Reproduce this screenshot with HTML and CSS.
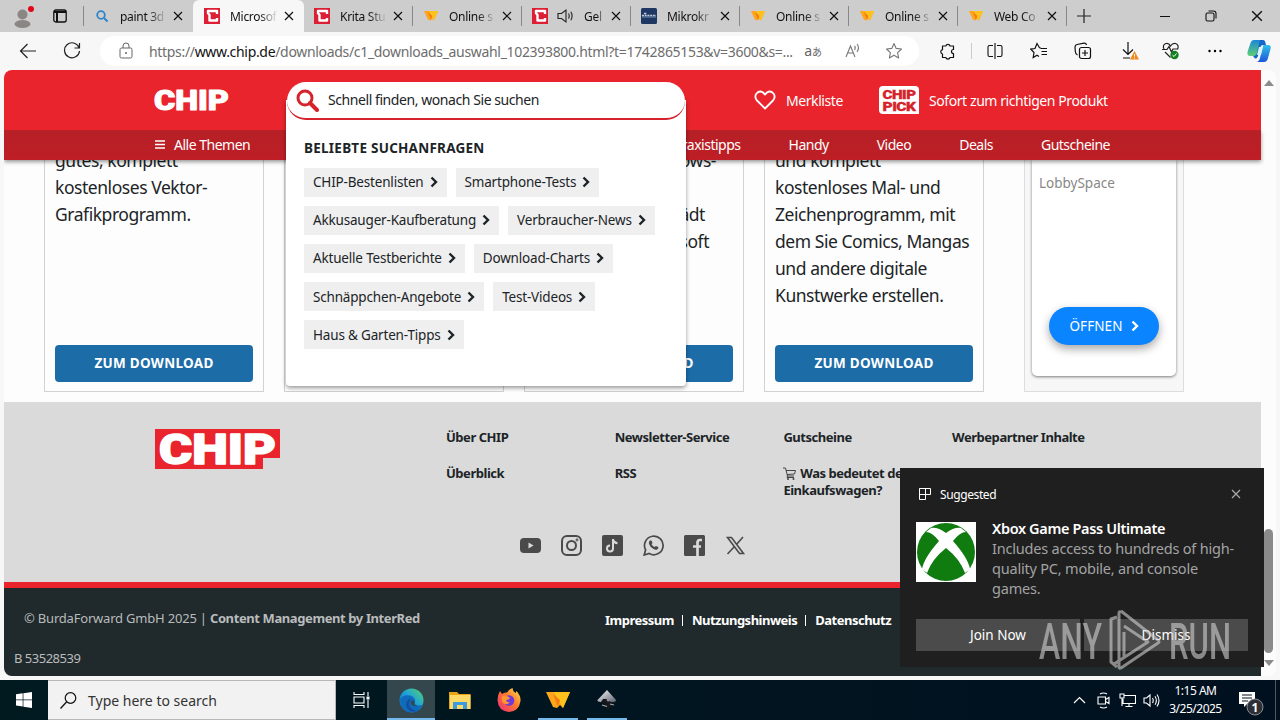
FILE: index.html
```html
<!DOCTYPE html>
<html lang="de">
<head>
<meta charset="UTF-8" />
<meta name="viewport" content="width=device-width, initial-scale=1" />
<title>CHIP Downloads</title>
<link rel="stylesheet" href="styles.css">
</head>
<body>
<svg class="sprite" width="0" height="0">
  <defs>
    <linearGradient id="gEdge" x1="0" y1="1" x2="1" y2="0"><stop offset="0" stop-color="#0c59a4"/><stop offset=".5" stop-color="#1b9de2"/><stop offset="1" stop-color="#56d66a"/></linearGradient>
    <linearGradient id="gFox" x1="1" y1="0" x2="0" y2="1"><stop offset="0" stop-color="#ffe14a"/><stop offset=".45" stop-color="#ff7a2f"/><stop offset="1" stop-color="#f0247a"/></linearGradient>
    <linearGradient id="gCop1" x1="0" y1="0" x2="0" y2="1"><stop offset="0" stop-color="#1a87d8"/><stop offset="1" stop-color="#5fcf72"/></linearGradient>
    <linearGradient id="gCop2" x1="0" y1="0" x2="0" y2="1"><stop offset="0" stop-color="#2fc0ea"/><stop offset="1" stop-color="#1c56d8"/></linearGradient>
    <linearGradient id="gInk" x1="0" y1="0" x2="1" y2="1"><stop offset="0" stop-color="#fff"/><stop offset="1" stop-color="#5a6070"/></linearGradient>
  </defs>
  <symbol id="x" viewBox="0 0 10 10"><path d="M1 1l8 8M9 1l-8 8" fill="none" stroke="currentColor" stroke-width="1.2"/></symbol>
  <symbol id="chev" viewBox="0 0 8 12"><path d="M1.500 1.500L6 6l-4.500 4.500" fill="none" stroke="currentColor" stroke-width="2.400"/></symbol>
  <symbol id="fav-chip" viewBox="0 0 16 16"><rect width="16" height="16" fill="#dd1f35"/><path d="M13 6V3H4v2l1.500 2V12.500H13V10" fill="none" stroke="#fff" stroke-width="2.400" stroke-linejoin="round"/></symbol>
  <symbol id="fav-w" viewBox="0 0 24 17"><path d="M0 0h24l-7 16-3-3-3 3-4-1z" fill="#ffa51c"/><path d="M8 0h16l-7 16z" fill="#ffc21c"/><path d="M7 2l5 13 2-7z" fill="#f47b12"/></symbol>
  <symbol id="star" viewBox="0 0 18 18"><path d="M9 1.500l2.200 4.900 5.300.6-3.900 3.600 1 5.300L9 13.300l-4.600 2.600 1-5.300L1.500 7l5.300-.6z" fill="none" stroke="currentColor" stroke-width="1.100" stroke-linejoin="round"/></symbol>
</svg>

<div class="tabbar">
  <div class="tab-tools">
    <svg class="avatar" width="20" height="24" viewBox="0 0 20 24"><ellipse cx="8.500" cy="20" rx="8" ry="4" fill="#8a8683"/><circle cx="8.500" cy="10.500" r="5" fill="#8a8683"/><circle cx="17" cy="5" r="3" fill="#e3061a"/></svg>
    <svg width="14" height="14" viewBox="0 0 14 14"><rect x=".8" y="1" width="12.400" height="12" rx="2" fill="none" stroke="#111" stroke-width="1.300"/><path d="M1 3h12M4 3v10" stroke="#111" stroke-width="2"/></svg>
  </div>
  <div class="tab"><svg width="16" height="16" viewBox="0 0 16 16"><circle cx="7" cy="7" r="3.800" fill="none" stroke="#2f83c9" stroke-width="1.800"/><path d="M10 10l3.500 3.500" stroke="#2f83c9" stroke-width="2"/></svg><span>paint 3d</span><svg class="close"><use href="#x"/></svg></div>
  <div class="tab active"><svg width="16" height="16"><use href="#fav-chip"/></svg><span>Microsof</span><svg class="close"><use href="#x"/></svg></div>
  <div class="tab line"><svg width="16" height="16"><use href="#fav-chip"/></svg><span>Krita Stu</span><svg class="close"><use href="#x"/></svg></div>
  <div class="tab line"><svg class="w" width="16" height="10"><use href="#fav-w"/></svg><span>Online s</span><svg class="close"><use href="#x"/></svg></div>
  <div class="tab line"><svg width="16" height="16"><use href="#fav-chip"/></svg><svg class="speaker" width="17" height="16" viewBox="0 0 17 16"><path d="M1 5.500h3.500L9 2v12l-4.500-3.500H1zM11.500 5.500q1.500 2.500 0 5M13.800 3.800q2.600 4.200 0 8.400" fill="none" stroke="#222" stroke-width="1.100"/></svg><span>Gel</span><svg class="close"><use href="#x"/></svg></div>
  <div class="tab line"><svg width="16" height="16" viewBox="0 0 16 16"><rect width="16" height="16" rx="1.500" fill="#1e3763"/><path d="M1 9h14" stroke="#6f87ab"/><path d="M1 7.500h14M3 5.500h3" stroke="#c2cddd" stroke-width="1.500" stroke-dasharray="2 .7"/></svg><span>Mikrokr</span><svg class="close"><use href="#x"/></svg></div>
  <div class="tab line"><svg class="w" width="16" height="10"><use href="#fav-w"/></svg><span>Online s</span><svg class="close"><use href="#x"/></svg></div>
  <div class="tab line"><svg class="w" width="16" height="10"><use href="#fav-w"/></svg><span>Online s</span><svg class="close"><use href="#x"/></svg></div>
  <div class="tab line"><svg class="w" width="16" height="10"><use href="#fav-w"/></svg><span>Web Co</span><svg class="close"><use href="#x"/></svg></div>
  <svg class="plus" width="14" height="14" viewBox="0 0 14 14"><path d="M7 0v14M0 7h14" stroke="#222" stroke-width="1.200"/></svg>
  <div class="win-buttons">
    <svg width="12" height="12" viewBox="0 0 12 12"><path d="M1 6.500h10" stroke="#111"/></svg>
    <svg width="12" height="12" viewBox="0 0 12 12"><rect x="1" y="3" width="8" height="8" rx="1.500" fill="none" stroke="#111" stroke-width="1.100"/><path d="M3.500 1h5q2.500 0 2.500 2.500V8.500" fill="none" stroke="#111" stroke-width="1.100"/></svg>
    <svg width="12" height="12"><use href="#x"/></svg>
  </div>
</div>

<div class="toolbar">
  <div class="nav-icons">
    <svg width="18" height="16" viewBox="0 0 18 16"><path d="M17 8H2M8.500 1L1.500 8l7 7" fill="none" stroke="#222" stroke-width="1.200"/></svg>
    <svg width="18" height="18" viewBox="0 0 18 18"><path d="M16 5.500A7.500 7.500 0 1 0 16.500 9M16.500 1v5h-5" fill="none" stroke="#222" stroke-width="1.200"/></svg>
  </div>
  <div class="address">
    <svg width="14" height="18" viewBox="0 0 14 18"><rect x="1" y="6" width="12" height="10" rx="1.500" fill="none" stroke="#666"/><path d="M4 6V4a3 3 0 0 1 6 0v2" fill="none" stroke="#666"/><circle cx="7" cy="11" r="1" fill="#666"/></svg>
    <span class="url">https://<b>www.chip.de</b>/downloads/c1_downloads_auswahl_102393800.html?t=1742865153&amp;v=3600&amp;s=...</span>
    <span class="translate">a<small>あ</small></span>
    <svg class="read" width="16" height="16" viewBox="0 0 16 16"><path d="M1 14L5.500 3 10 14M2.600 10h5.800M9.500 3q1.500 1.500 0 4M12 1q3 3.500 0 8" fill="none" stroke="#777" stroke-width="1.100"/></svg>
    <svg class="grey" width="18" height="18"><use href="#star"/></svg>
  </div>
  <div class="tool-icons">
    <i class="ext"><svg width="18" height="18" viewBox="0 0 18 18"><path d="M3.500 4h3.300a2.200 2.200 0 0 1 4.200 0h3.500v3.500a1 1 0 0 0 0 4V15.500H11a2.200 2.200 0 0 1-4.200 0H3.500V12A2.200 2.200 0 0 1 3.500 7.700z" fill="none" stroke="#111" stroke-width="1.200" stroke-linejoin="round"/></svg></i>
    <i><svg width="16" height="16" viewBox="0 0 16 16"><path d="M6 2.500H2.500q-1.500 0-1.500 1.500v8q0 1.500 1.500 1.500H6M10 2.500h3.500q1.500 0 1.500 1.500v8q0 1.500-1.500 1.500H10M8 0v16" fill="none" stroke="#111" stroke-width="1.100"/></svg></i>
    <i><svg width="18" height="18" viewBox="0 0 18 18"><path d="M11 6L9.500 5.800 7 1.500 5 6.500l-4.200.6L4 10.500 3.200 15.500 7 13.200l2 1.200M10.500 6.500H17M11.500 9.500H17M11.500 12.500H17" fill="none" stroke="#111" stroke-width="1.200"/></svg></i>
    <i><svg width="18" height="18" viewBox="0 0 18 18"><rect x="5.500" y="5.500" width="11" height="11" rx="2" fill="none" stroke="#111" stroke-width="1.200"/><path d="M11 8v6M8 11h6M3.500 13Q1.500 12 1.300 9.500L1 5Q1 3 3 2.500L10 1.200Q12 1 12.500 3" fill="none" stroke="#111" stroke-width="1.200"/></svg></i>
    <i><svg class="dl" width="20" height="20" viewBox="0 0 20 20"><path d="M8 1v12M3 8.500L8 13.500l5-5M3 17h7" fill="none" stroke="#111" stroke-width="1.200"/><path d="M14.500 10l4.500 8.500h-9z" fill="#f08a1d"/><path d="M14.500 13v2.500M14.500 16.500v1" stroke="#fff"/></svg></i>
    <i><svg width="18" height="18" viewBox="0 0 18 18"><path d="M2 7Q0 3 4 1.500 7 1 8.500 4 10.500 1 13.500 1.500 17.500 3 15.500 7.500M0 7.500h5L7 4.500 9.500 10l1.500-3h4.500M3 10l5.500 5.500" fill="none" stroke="#222" stroke-width="1.200"/><circle cx="12.500" cy="13" r="4.200" fill="#12801f"/><path d="M10.500 13.200l1.500 1.300 2.500-3" fill="none" stroke="#fff"/></svg></i>
    <i><svg width="14" height="4" viewBox="0 0 14 4"><circle cx="1.500" cy="2" r="1.200"/><circle cx="7" cy="2" r="1.200"/><circle cx="12.500" cy="2" r="1.200"/></svg></i>
    <i><svg width="24" height="24" viewBox="0 0 24 24"><path d="M7 1h8l-4 12q-1 4-4 4H3Q-.5 17 .8 12L3.500 4Q4.500 1 7 1z" fill="url(#gCop1)"/><path d="M16.500 6H21q3.500 0 2.500 4l-2.500 9q-1 4-4 4H9q3 0 4-4l2-9z" fill="url(#gCop2)"/><path d="M13 1h3q2 0 2.500 3l.5 2h-3q-2 0-2.500 2L11 17q-1 3-3 2.500L6 17q3 0 4-3z" fill="#1565c8"/><path d="M12 8h4l-2 8H10z" fill="#d9f2fb"/></svg></i>
  </div>
</div>

<div class="window">
  <div class="page">
    <header class="site-header">
      <svg class="logo" width="76" height="22" viewBox="0 0 76 22"><text x="0" y="20.500" textLength="75" lengthAdjust="spacingAndGlyphs">CHIP</text></svg>
      <div class="search">
        <div class="suggest">
          <h2>BELIEBTE SUCHANFRAGEN</h2>
          <div class="terms">
            <a>CHIP-Bestenlisten<svg><use href="#chev"/></svg></a>
            <a>Smartphone-Tests<svg><use href="#chev"/></svg></a>
            <a>Akkusauger-Kaufberatung<svg><use href="#chev"/></svg></a>
            <a>Verbraucher-News<svg><use href="#chev"/></svg></a>
            <a>Aktuelle Testberichte<svg><use href="#chev"/></svg></a>
            <a>Download-Charts<svg><use href="#chev"/></svg></a>
            <a>Schnäppchen-Angebote<svg><use href="#chev"/></svg></a>
            <a>Test-Videos<svg><use href="#chev"/></svg></a>
            <a>Haus &amp; Garten-Tipps<svg><use href="#chev"/></svg></a>
          </div>
        </div>
        <div class="search-field">
          <svg width="23" height="23" viewBox="0 0 23 23"><circle cx="9" cy="9" r="7" fill="none" stroke="#d5222b" stroke-width="3"/><path d="M14 14l7 7" stroke="#d5222b" stroke-width="4" stroke-linecap="round"/></svg>
          <span>Schnell finden, wonach Sie suchen</span>
        </div>
      </div>
      <div class="header-link merk">
        <svg width="22" height="20" viewBox="0 0 22 20"><path d="M11 18.500L3 10.500Q0 7 2.500 3.500 5.500 0 9 2.500L11 4.500l2-2Q16.500 0 19.500 3.500 22 7 19 10.500z" fill="none" stroke="#fff" stroke-width="1.800" stroke-linejoin="round"/></svg>
        <span>Merkliste</span>
      </div>
      <div class="header-link">
        <svg class="pick" width="40" height="28" viewBox="0 0 40 28"><path d="M4 0h32q4 0 4 4v24H4q-4 0-4-4V4q0-4 4-4z" fill="#fff"/><text x="3.500" y="12.500" textLength="33" lengthAdjust="spacingAndGlyphs">CHIP</text><text x="3.500" y="24.500" textLength="33" lengthAdjust="spacingAndGlyphs">PICK</text></svg>
        <span>Sofort zum richtigen Produkt</span>
      </div>
    </header>
    <nav class="site-nav">
      <a class="all"><svg width="10" height="9" viewBox="0 0 10 9"><path d="M0 1h10M0 4.500h10M0 8h10" stroke="#fff" stroke-width="1.400"/></svg>Alle Themen</a>
      <div class="nav-right"><a>Praxistipps</a><a>Handy</a><a>Video</a><a>Deals</a><a>Gutscheine</a></div>
    </nav>

    <main>
      <article class="card"><p>gutes, komplett<br>kostenloses Vektor-<br>Grafikprogramm.</p><a class="btn">ZUM DOWNLOAD</a></article>
      <article class="card"><p></p><a class="btn">ZUM DOWNLOAD</a></article>
      <article class="card"><p class="short"><span class="l1">Windows-</span><br><br><span class="l2">lädt</span><br><span class="l3">Microsoft</span></p><a class="btn">ZUM DOWNLOAD</a></article>
      <article class="card"><p>und komplett<br>kostenloses Mal- und<br>Zeichenprogramm, mit<br>dem Sie Comics, Mangas<br>und andere digitale<br>Kunstwerke erstellen.</p><a class="btn">ZUM DOWNLOAD</a></article>
      <aside class="ad"><div><span>LobbySpace</span><a>ÖFFNEN<svg><use href="#chev"/></svg></a></div></aside>
    </main>

    <footer>
      <div class="foot-top">
        <svg class="foot-logo" width="125" height="40" viewBox="0 0 125 40"><path d="M0 0h125v29h-17v11H0z" fill="#e9242c"/><text x="4" y="34.500" textLength="117" lengthAdjust="spacingAndGlyphs">CHIP</text></svg>
        <div class="foot-links">
          <a>Über CHIP</a><a>Newsletter-Service</a><a>Gutscheine</a><a>Werbepartner Inhalte</a>
          <a>Überblick</a><a>RSS</a><a><svg width="13" height="13" viewBox="0 0 13 13"><path d="M0 1h2.500L4.500 9H11M3 3.500h9.500L11.500 7 4 7.500M4.500 9l-.5 1.500h7" fill="none" stroke="#444"/><circle cx="5" cy="12" r="1" fill="#444"/><circle cx="10.500" cy="12" r="1" fill="#444"/></svg> Was bedeutet der<br>Einkaufswagen?</a>
        </div>
        <div class="social">
          <svg viewBox="0 0 21 21"><rect y="3" width="21" height="15" rx="4" fill="#4a4a4a"/><path d="M8.500 7.500v6l5-3z" fill="#dadada"/></svg>
          <svg viewBox="0 0 21 21" fill="none" stroke="#4a4a4a" stroke-width="2"><rect x="1" y="1" width="19" height="19" rx="5"/><circle cx="10.500" cy="10.500" r="4.500"/><circle cx="16" cy="5" r=".4"/></svg>
          <svg viewBox="0 0 21 21"><rect width="21" height="21" rx="2" fill="#4a4a4a"/><path d="M11 4v9.500a3 3 0 1 1-3-3M11 4.500q.8 3.500 4.500 3.800" fill="none" stroke="#dadada" stroke-width="2"/></svg>
          <svg viewBox="0 0 21 21"><path d="M1.200 20l1.400-5.200a9.300 9.300 0 1 1 3.600 3.700z" fill="none" stroke="#4a4a4a" stroke-width="1.700"/><path d="M6.500 6Q8 4.500 8.700 6l.8 2-.9 1.300q1 2 3 2.800l1.300-1.200 2.300 1.100q.8.700-.7 2.200-1.500 1.200-4-.1Q7 12 6 9 5.500 7 6.500 6z" fill="#4a4a4a"/></svg>
          <svg viewBox="0 0 21 21"><rect width="21" height="21" rx="1.500" fill="#4a4a4a"/><path d="M18 5h-2q-2.500 0-2.500 2.500V21M9 11.500h8" fill="none" stroke="#dadada" stroke-width="2.700"/></svg>
          <svg viewBox="0 0 21 21"><path d="M2.500 2.500h4L18.500 18.500h-4zM18 2L11.500 9.500M9 12L2.500 19" fill="none" stroke="#4a4a4a" stroke-width="1.600"/></svg>
        </div>
      </div>
      <div class="foot-bottom">
        <div class="copy">© BurdaForward GmbH 2025 | <b>Content Management by InterRed</b></div>
        <div class="legal"><a>Impressum</a><i></i><a>Nutzungshinweis</a><i></i><a>Datenschutz</a></div>
        <div class="ref">B 53528539</div>
      </div>
    </footer>
  </div>
  <div class="scrollbar">
    <svg width="10" height="6" viewBox="0 0 10 6"><path d="M0 6L5 0l5 6z" fill="#8b8b8b"/></svg>
    <div class="thumb"></div>
    <svg width="10" height="6" viewBox="0 0 10 6"><path d="M0 0h10L5 6z" fill="#8b8b8b"/></svg>
  </div>
</div>

<div class="toast">
  <div class="toast-head">
    <svg width="12" height="12" viewBox="0 0 12 12"><path d="M.5.500h11v6H.500zM.5.500v11h6V.500M.500 6.500h6" fill="none" stroke="#fff"/></svg>
    <span>Suggested</span>
    <svg class="close"><use href="#x"/></svg>
  </div>
  <div class="toast-body">
    <svg width="60" height="60" viewBox="0 0 60 60"><rect width="60" height="60" fill="#fff"/><circle cx="30" cy="30" r="29" fill="#107c10"/><path d="M15 6Q22 5 30 11 38 5 45 6L50 10Q44 10 37 19 52 36 54 47L49 51Q44 37 30 26 16 37 11 51L6 47Q8 36 23 19 16 10 10 10z" fill="#fff"/></svg>
    <div class="toast-text"><h3>Xbox Game Pass Ultimate</h3><p>Includes access to hundreds of high-<br>quality PC, mobile, and console<br>games.</p></div>
  </div>
  <div class="toast-actions"><button>Join Now</button><button>Dismiss</button></div>
</div>

<svg class="watermark" width="196" height="64" viewBox="0 0 196 64">
  <text x="1" y="51" textLength="63" lengthAdjust="spacingAndGlyphs">ANY</text>
  <text x="131" y="51" textLength="62" lengthAdjust="spacingAndGlyphs">RUN</text>
  <path d="M83 3L120 32q2 2 0 3L83 60q-2 1-2-1V5q0-2 2-1M79 9l-6 2v43l6 5M86 18l24 16-34 22M86 24v26" fill="none" stroke="#d0d0d0" stroke-width="3" stroke-linejoin="round"/>
</svg>

<div class="taskbar">
  <div class="start"><svg width="16" height="16" viewBox="0 0 16 16" fill="#fff"><path d="M0 2.200L6.700 1.300v6.200H0zM7.400 1.200L16 0v7.500H7.400zM0 8.300h6.700v6.200L0 13.600zM7.400 8.300H16V16l-8.600-1.300z"/></svg></div>
  <div class="task-search"><svg width="17" height="17" viewBox="0 0 17 17"><circle cx="10.500" cy="6" r="5.300" fill="none" stroke="#111" stroke-width="1.200"/><path d="M6.500 10L.5 16.500" stroke="#111" stroke-width="1.300"/></svg><span>Type here to search</span></div>
  <div class="task-view"><svg width="17" height="16" viewBox="0 0 17 16"><path d="M1 0v2.500h10V0M1 16v-2.500h10V16M1 5h10v6H1zM15 0v4M15 8v8" fill="none" stroke="#fff" stroke-width="1.100"/><path d="M13.500 4.500h3v3h-3z" fill="#fff"/></svg></div>
  <div class="apps">
    <div class="app current open"><svg width="25" height="25" viewBox="0 0 25 25"><circle cx="12.500" cy="12.500" r="12" fill="url(#gEdge)"/><path d="M1 11Q5 6 11 7.500q6 1.500 5 7-1 1 0 2 4 2 8 0-4 8-12 8Q2 23 1 11z" fill="#0f6cbd"/><path d="M12 11q-4 5 0 9 4 4 9 2-5 3-10 1Q5 19 8 13q2-3 4-2z" fill="#1450a0"/><path d="M12.500 12.500q3-1 3 2 0 3 3 3.500-5 1-6.500-2-1-2 .5-3.500z" fill="#2e4c55"/></svg></div>
    <div class="app"><svg width="22" height="19" viewBox="0 0 22 19"><path d="M0 1h8l2 2h11.500v15H0z" fill="#e8a317"/><path d="M1 4h20.500v14H1z" fill="#ffd966"/><path d="M4 18v-7h14v7h-4v-4H8v4z" fill="#3c9bdc"/></svg></div>
    <div class="app"><svg width="24" height="24" viewBox="0 0 24 24"><path d="M3 3l2 3Q7 4 10 4.500 12 1 15.500 0q0 3 3 5l1-2Q24 8 23.500 13 22 23.500 12 24 1 23 .5 12 .5 7 3 3z" fill="url(#gFox)"/><circle cx="12" cy="12.500" r="5.300" fill="#7139d8"/><path d="M5 8q5-1 8 2-1 2-4 2 1 3 4 2-3 4-7 1-2-3-1-7z" fill="#ff9632"/></svg></div>
    <div class="app open"><svg width="24" height="17"><use href="#fav-w"/></svg></div>
    <div class="app open"><svg width="20" height="21" viewBox="0 0 20 21"><path d="M10 0l9.500 10q1 2-2 2.500l-4 1.500 2 2-3 1-1.500 3.500-2-3-3-1.500 3-2-7-2Q-.5 11 1 9.500z" fill="#16181c"/><path d="M10 0l9 10q0 2-4 2-2-1-4-.5-2-.5-1-2.500H6L4 12Q-1 11.500 1 9.500z" fill="url(#gInk)"/><path d="M5 15l5 1.500M13 14l4 1" stroke="#aaa" stroke-width="1.200"/></svg></div>
  </div>
  <div class="tray">
    <i><svg width="13" height="8" viewBox="0 0 13 8"><path d="M1 7l5.500-5.500L12 7" fill="none" stroke="#fff" stroke-width="1.200"/></svg></i>
    <i><svg width="13" height="17" viewBox="0 0 13 17"><path d="M3 2q3.500-2 7 0M3 15q3.500 2 7 0M1 5h7.500v7H1zM8.500 7.500L12 5.500v6L8.500 9.500" fill="none" stroke="#fff" stroke-width="1.100"/></svg></i>
    <i><svg width="17" height="15" viewBox="0 0 17 15"><path d="M5 2.500h11.500v8H4V6M10 10.500v3M6.500 13.500h7M1 1h4v4H1zM3 5v8" fill="none" stroke="#fff" stroke-width="1.100"/></svg></i>
    <i><svg width="17" height="15" viewBox="0 0 17 15"><path d="M1 5h2.500L7 2v11L3.500 10H1zM9.500 5q1.500 2.500 0 5M12 3.200q2.700 4.300 0 8.600M14 1.500q4 6 0 12" fill="none" stroke="#fff" stroke-width="1.100"/></svg></i>
  </div>
  <div class="clock">1:15 AM<br>3/25/2025</div>
  <div class="notif"><svg width="25" height="25" viewBox="0 0 25 25"><path d="M0 1h16v12H8l-3 3v-3H0z" fill="#fff"/><path d="M3 4h10M3 7h10M3 10h6" stroke="#07101c"/><circle cx="16" cy="16" r="8" fill="#2c3036" stroke="#8a8d92"/><text x="16" y="20.500">1</text></svg></div>
</div>
</body>
</html>
```
FILE: styles.css
```css
* {
  box-sizing: border-box;
}
body {
  margin: 0;
  width: 1280px;
  height: 720px;
  overflow: hidden;
  position: relative;
  background: #f7f7f7;
  font-family: "Noto Sans", sans-serif;
  color: #1c2427;
}
svg {
  flex: none;
}
.sprite {
  position: absolute;
}

/* browser tabs */
.tabbar {
  display: flex;
  align-items: center;
  height: 32px;
  background: #cdcdcd;
  font-size: 12px;
  letter-spacing: -0.3px;
  color: #111;
}
.tab-tools {
  width: 84px;
  height: 20px;
  padding-left: 14px;
  display: flex;
  align-items: center;
  gap: 19px;
  border-right: 1px solid #888;
}
.tab {
  width: 109px;
  height: 32px;
  padding: 0 10px;
  display: flex;
  align-items: center;
  position: relative;
}
.tab span {
  flex: 1;
  margin-left: 10px;
  margin-right: 6px;
  overflow: hidden;
  white-space: nowrap;
  -webkit-mask-image: linear-gradient(to right, #000 60%, transparent);
  mask-image: linear-gradient(to right, #000 60%, transparent);
}
.tab.active {
  width: 111px;
  padding-left: 11px;
  background: #f7f7f7;
  border-radius: 6px 6px 0 0;
}
.tab.line::after {
  content: "";
  position: absolute;
  right: 0;
  top: 6px;
  width: 1px;
  height: 20px;
  background: #888;
}
.tab .speaker {
  margin-left: 9px;
}
.close {
  width: 10px;
  height: 10px;
}
.plus {
  margin-left: 10px;
}
.win-buttons {
  margin-left: auto;
  padding-right: 17px;
  display: flex;
  gap: 34px;
}

/* toolbar */
.toolbar {
  height: 38px;
  display: flex;
  align-items: center;
}
.nav-icons {
  flex: none;
  width: 100px;
  padding-left: 19px;
  display: flex;
  align-items: center;
  gap: 26px;
}
.address {
  flex: none;
  width: 819px;
  height: 30px;
  padding: 0 16px 0 19px;
  border-radius: 15px;
  background: #fff;
  display: flex;
  align-items: center;
}
.url {
  width: 657px;
  margin-left: 16px;
  font-size: 14px;
  letter-spacing: -0.32px;
  color: #6d6d6d;
  white-space: nowrap;
}
.url b {
  font-weight: normal;
  color: #111;
}
.translate {
  font-size: 14px;
  line-height: 18px;
  color: #666;
  width: 41px;
  white-space: nowrap;
}
.translate small {
  font: 10px "Noto Sans CJK JP", sans-serif;
  line-height: 10px;
}
.read {
  margin-right: 24px;
}
.grey {
  color: #777;
}
.tool-icons {
  flex: none;
  display: flex;
  margin-left: 6px;
}
.tool-icons i {
  width: 44px;
  height: 24px;
  display: flex;
  align-items: center;
  justify-content: center;
}
.tool-icons .ext {
  width: 48px;
  padding-right: 3px;
  background: linear-gradient(#ccc, #ccc) 46px 4px / 1px 16px no-repeat;
}
.tool-icons .dl {
  margin-left: 5px;
}

/* web page */
.window {
  margin: 0 4px;
  height: 606px;
  display: flex;
  border-radius: 8px;
  overflow: hidden;
  background: #fcfcfc;
}
.page {
  width: 1257px;
  background: #fdfdfd;
}
.site-header {
  position: relative;
  z-index: 3;
  height: 60px;
  background: #e9242c;
  color: #fff;
  display: flex;
  align-items: center;
  padding-left: 150px;
  font-size: 14px;
}
.logo text,
.foot-logo text {
  font: 900 27px Roboto, sans-serif;
  fill: #fff;
  stroke: #fff;
  stroke-width: 1px;
  stroke-linejoin: round;
}
.foot-logo text {
  font-size: 42px;
  stroke-width: 1.5px;
}
.search {
  position: relative;
  z-index: 5;
  width: 400px;
  margin-top: 2px;
  margin-left: 56px;
  color: #1c2427;
}
.search-field {
  position: relative;
  height: 38px;
  margin: 0 1px;
  padding-left: 9px;
  border-radius: 19px;
  border-bottom: 2px solid #d5222b;
  background: #fff;
  display: flex;
  align-items: center;
  gap: 9px;
  letter-spacing: -0.43px;
}
.search-field span {
  padding-bottom: 1px;
}
.suggest {
  position: absolute;
  top: 18px;
  left: 0;
  width: 400px;
  height: 286px;
  padding: 36px 18px 0;
  background: #fff;
  border-radius: 0 0 4px 4px;
  box-shadow: 0 2px 4px rgba(0,0,0,0.4);
}
.suggest h2 {
  margin: 0 0 7.5px;
  font-size: 13.5px;
  line-height: 24px;
  letter-spacing: 0.25px;
}
.terms {
  display: flex;
  flex-wrap: wrap;
  gap: 9.2px 9px;
}
.terms a {
  height: 29px;
  padding: 0 9px;
  background: #efefef;
  display: flex;
  align-items: center;
  gap: 6px;
  font-size: 13.5px;
  letter-spacing: -0.18px;
}
.terms svg,
.ad svg {
  width: 8px;
  height: 12px;
}
.header-link {
  display: flex;
  align-items: center;
  gap: 10px;
  letter-spacing: -0.42px;
}
.header-link span {
  white-space: nowrap;
}
.merk {
  width: 125px;
  margin-left: 68px;
}
.pick text {
  font: 900 12px Roboto, sans-serif;
  fill: #d5222b;
  stroke: #d5222b;
  stroke-width: 0.3px;
}
.site-nav {
  position: relative;
  z-index: 2;
  height: 30px;
  background: linear-gradient(#b62026, #bf1e26);
  box-shadow: 0 2px 4px rgba(0,0,0,0.4);
  color: #fff;
  display: flex;
  align-items: center;
  justify-content: space-between;
  padding: 0 151px 1px;
  font-size: 14px;
  letter-spacing: -0.5px;
}
.all {
  display: flex;
  align-items: center;
  gap: 9px;
}
.nav-right {
  display: flex;
  gap: 48px;
}
main {
  height: 242px;
  padding: 0 77px 10px 40px;
  display: flex;
  gap: 20px;
  overflow: hidden;
}
.card {
  width: 220px;
  height: 232px;
  padding: 0 10px 9px;
  border: 1px solid #d2d2d2;
  border-top: 0;
  display: flex;
  flex-direction: column;
  justify-content: space-between;
}
.card p {
  margin: -13px 0 0;
  font-size: 17.5px;
  line-height: 27px;
  letter-spacing: -0.45px;
  white-space: nowrap;
}
.card .short {
  text-align: right;
}
.l1 {
  padding-right: 17px;
}
.l2 {
  padding-right: 28px;
}
.l3 {
  padding-right: 24px;
}
.btn {
  height: 37px;
  background: #1c6ca7;
  border-radius: 4px;
  color: #fff;
  font-size: 13.5px;
  font-weight: bold;
  line-height: 36px;
  text-align: center;
  letter-spacing: 0.3px;
}
.ad {
  width: 160px;
  height: 232px;
  margin-left: 20px;
  padding: 0 7px 15px;
  background: #f7f7f7;
  border: 1px solid #ddd;
  border-top: 0;
}
.ad div {
  height: 216px;
  padding: 14px 17px 31px 7px;
  background: #fff;
  border-radius: 0 0 5px 5px;
  box-shadow: 0 1px 3px rgba(0,0,0,0.5);
  display: flex;
  flex-direction: column;
  justify-content: space-between;
  font-size: 13.5px;
  letter-spacing: 0;
  color: #888;
}
.ad a {
  width: 110px;
  height: 38px;
  margin-left: 10px;
  padding-bottom: 1px;
  border-radius: 19px;
  background: #0a84ff;
  color: #fff;
  display: flex;
  align-items: center;
  justify-content: center;
  gap: 8px;
  letter-spacing: 0.1px;
  box-shadow: 0 4px 10px rgba(0,0,0,0.35);
}

/* footer */
.foot-top {
  height: 186px;
  padding: 27px 0 0 151px;
  background: #dadada;
  border-bottom: 6px solid #e9242c;
  display: grid;
  grid-template-columns: 291px 1fr;
  grid-template-rows: 106px 21px;
}
.foot-links {
  display: grid;
  grid-template-columns: repeat(4, 168.7px);
  grid-template-rows: 36px 36px;
  font-size: 13px;
  font-weight: bold;
  line-height: 17px;
  letter-spacing: -0.46px;
}
.foot-links svg {
  vertical-align: -2px;
  margin-right: 1px;
}
.foot-links a {
  white-space: nowrap;
}
.social {
  grid-column: 1 / 3;
  display: flex;
  gap: 20px;
  margin-left: 365px;
}
.social svg {
  width: 21px;
  height: 21px;
}
.foot-bottom {
  height: 88px;
  padding: 20px 10px 0;
  background: #20292b;
  color: #b9bcbd;
  font-size: 13px;
  line-height: 20px;
  letter-spacing: -0.2px;
  display: grid;
  grid-template-columns: 591px 1fr;
  grid-template-rows: 40px 20px;
}
.copy {
  padding-left: 10px;
}
.copy b {
  letter-spacing: -0.4px;
}
.ref {
  letter-spacing: -0.5px;
}
.legal {
  padding-top: 2px;
  display: flex;
  align-items: center;
  height: 22px;
  color: #fff;
  font-weight: bold;
  letter-spacing: -0.5px;
}
.legal i {
  width: 1px;
  height: 11px;
  margin: 0 9px 0 8px;
  background: #fff;
}
.scrollbar {
  width: 15px;
  padding: 10px 0;
  display: flex;
  flex-direction: column;
  align-items: center;
}
.thumb {
  width: 9px;
  height: 124px;
  margin-top: auto;
  margin-bottom: 7px;
  border-radius: 5px;
  background: #8b8b8b;
}

/* notification toast */
.toast {
  position: absolute;
  left: 900px;
  top: 468px;
  z-index: 10;
  width: 364px;
  height: 199px;
  padding: 16px;
  background: #1f1f1f;
  color: #fff;
  display: flex;
  flex-direction: column;
}
.toast-head {
  display: flex;
  align-items: center;
  height: 20px;
  padding: 0 7px 0 3px;
  font-size: 12px;
  gap: 9px;
  letter-spacing: -0.4px;
}
.toast-head .close {
  margin-left: auto;
  color: #aaa;
}
.toast-body {
  display: flex;
  gap: 16px;
  margin-top: 18px;
}
.toast-text {
  margin-top: -4px;
  font-size: 14.5px;
  line-height: 20px;
  letter-spacing: -0.2px;
  white-space: nowrap;
}
.toast h3 {
  margin: 0;
  font-size: 14.5px;
  font-weight: 600;
  letter-spacing: -0.35px;
}
.toast p {
  margin: 0;
  color: #a3a3a3;
}
.toast-actions {
  display: flex;
  gap: 4px;
  margin-top: auto;
}
.toast button {
  flex: 1;
  height: 32px;
  border: 0;
  padding: 0;
  background: #4b4b4b;
  color: #fff;
  font: 13.5px "Noto Sans", sans-serif;
}
.watermark {
  position: absolute;
  left: 1038px;
  top: 608px;
  z-index: 11;
  opacity: 0.6;
}
.watermark text {
  font: 500 50px Roboto, sans-serif;
  fill: #d0d0d0;
}

/* taskbar */
.taskbar {
  height: 40px;
  margin-top: 4px;
  background: linear-gradient(to right, #001a20, #01101f);
  display: flex;
  align-items: center;
  color: #fff;
}
.start {
  width: 48px;
  display: flex;
  justify-content: center;
}
.task-search {
  width: 288px;
  height: 40px;
  padding-left: 12px;
  background: #f2f2f2;
  border: 1px solid #b5b9ba;
  border-left: 0;
  display: flex;
  align-items: center;
  gap: 11px;
  font-size: 14px;
  color: #333;
}
.task-view {
  width: 51px;
  display: flex;
  justify-content: center;
}
.apps {
  display: flex;
  gap: 1px;
}
.app {
  width: 48px;
  height: 40px;
  display: flex;
  align-items: center;
  justify-content: center;
  background-position: bottom;
  background-repeat: no-repeat;
}
.app.open {
  background-image: linear-gradient(#76b9ed, #76b9ed);
  background-size: 40px 2px;
}
.app.current {
  background-color: #33474d;
  background-size: 48px 2px;
}
.tray {
  margin-left: auto;
  display: flex;
}
.tray i {
  width: 24px;
  height: 24px;
  display: flex;
  align-items: center;
  justify-content: center;
}
.clock {
  width: 65px;
  font-size: 12px;
  line-height: 18px;
  letter-spacing: -0.5px;
  text-align: center;
}
.notif {
  width: 48px;
  height: 40px;
  padding: 11px 0 0 11px;
  border-right: 1px solid #555;
  margin-right: 4px;
}
.notif text {
  font: bold 12px "Noto Sans", sans-serif;
  fill: #fff;
  text-anchor: middle;
}
```
